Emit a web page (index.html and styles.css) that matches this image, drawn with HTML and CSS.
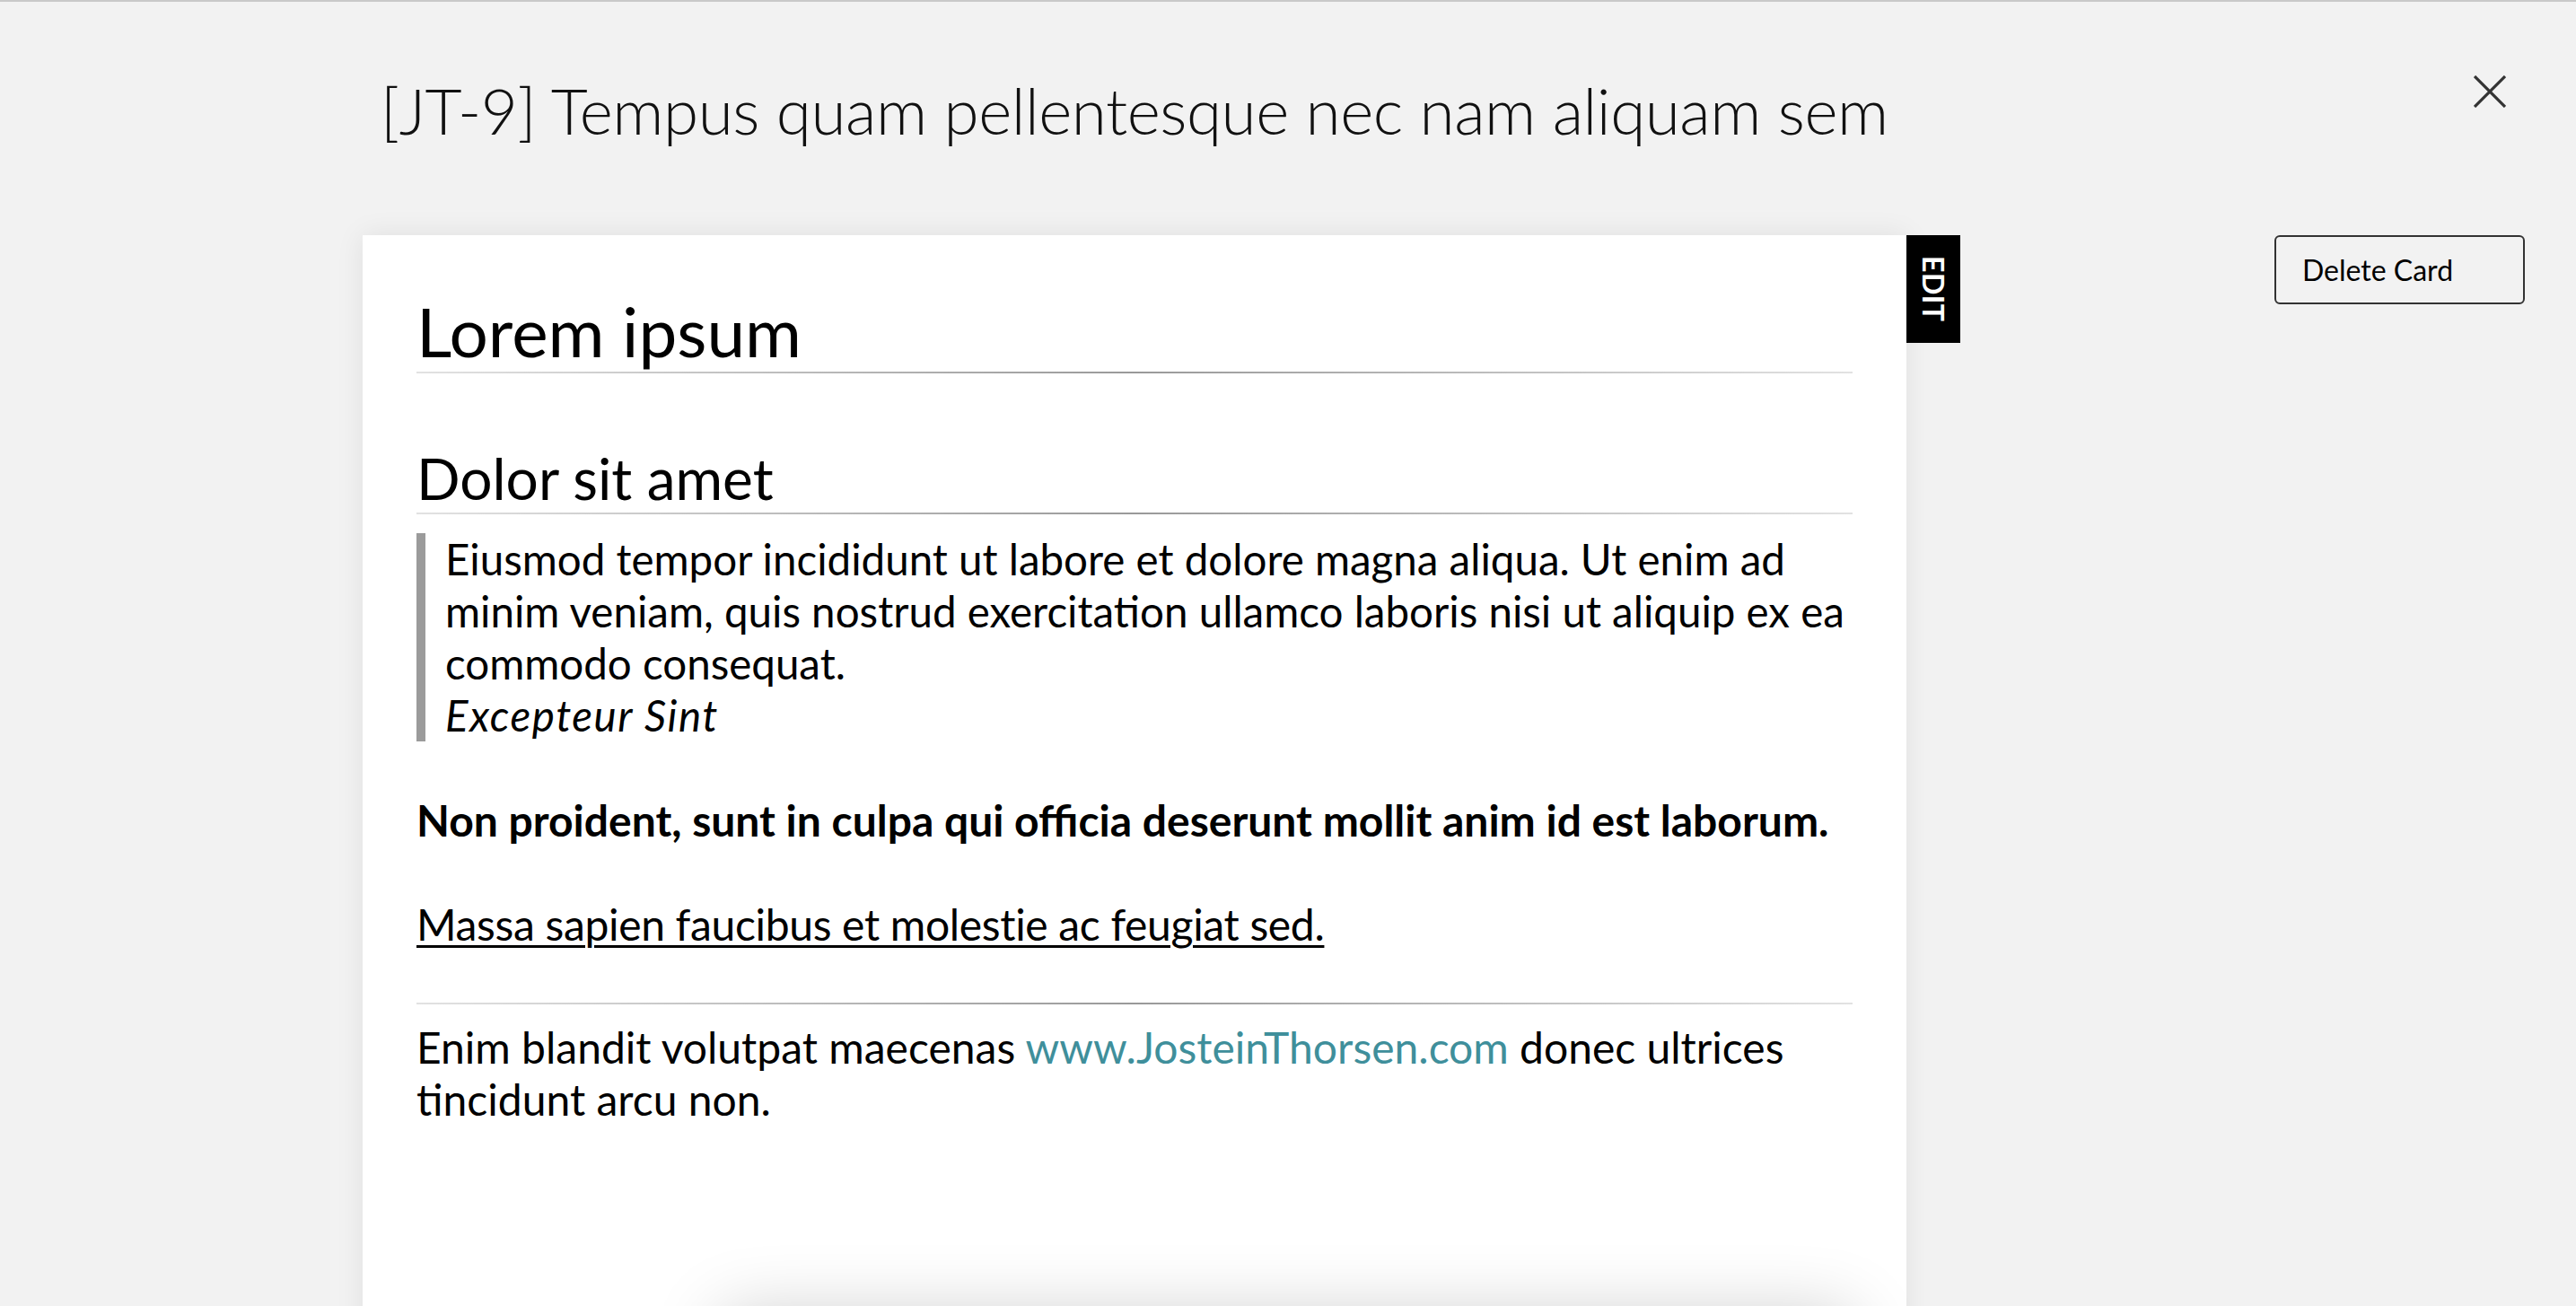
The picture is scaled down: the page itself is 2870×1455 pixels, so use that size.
FILE: index.html
```html
<!DOCTYPE html>
<html lang="en">
<head>
<meta charset="utf-8">
<title>[JT-9] Tempus quam pellentesque nec nam aliquam sem</title>
<link rel="stylesheet" href="styles.css">
</head>
<body>
<div class="page">
  <header class="top">
    <h1 class="title">[JT-9] Tempus quam pellentesque nec nam aliquam sem</h1>
    <button class="close" aria-label="Close">
      <svg viewBox="0 0 36 36" width="36" height="36"><path d="M1 1 L35 35 M35 1 L1 35" stroke="#333" stroke-width="3.2" fill="none"/></svg>
    </button>
  </header>
  <main class="layout">
    <article class="card">
      <div class="edit-tab">EDIT</div>
      <h1 class="doc-h1">Lorem ipsum</h1>
      <h2 class="doc-h2">Dolor sit amet</h2>
      <blockquote class="quote">
        <p>Eiusmod tempor incididunt ut labore et dolore magna aliqua. Ut enim ad minim veniam, quis nostrud exercitation ullamco laboris nisi ut aliquip ex ea commodo consequat.</p>
        <p><em class="cite">Excepteur Sint</em></p>
      </blockquote>
      <p class="para para-bold"><strong>Non proident, sunt in culpa qui officia deserunt mollit anim id est laborum.</strong></p>
      <p class="para para-under"><u>Massa sapien faucibus et molestie ac feugiat sed.</u></p>
      <hr class="rule">
      <p class="para para-last">Enim blandit volutpat maecenas <a class="link" href="#">www.JosteinThorsen.com</a> donec ultrices tincidunt arcu non.</p>
      <div class="footer-panel"></div>
    </article>
    <aside class="side">
      <button class="delete">Delete Card</button>
    </aside>
  </main>
</div>
</body>
</html>
```
FILE: styles.css
```css
html, body {
  margin: 0;
  padding: 0;
  height: 100%;
  overflow: hidden;
}
body {
  background: #f2f2f2;
  font-family: Lato, "Open Sans", sans-serif;
  color: #000;
  border-top: 2px solid #c9c9c9;
  box-sizing: border-box;
}
.page {
  display: flex;
  flex-direction: column;
}
.top {
  display: flex;
  justify-content: space-between;
  align-items: flex-start;
  padding: 78px 78px 0 424px;
}
.title {
  margin: 0;
  font-family: Lato, sans-serif;
  font-weight: 300;
  font-size: 71px;
  letter-spacing: -0.45px;
  line-height: 86px;
  color: #111;
}
.close {
  margin-top: 4px;
  padding: 0;
  border: 0;
  background: none;
  width: 36px;
  height: 36px;
  display: flex;
}
.layout {
  display: flex;
  align-items: flex-start;
  padding-left: 404px;
  margin-top: 96px;
}
.card {
  position: relative;
  width: 1720px;
  box-sizing: border-box;
  padding: 60px 60px 0;
  background: #fff;
  box-shadow: 0 0 30px rgba(0, 0, 0, 0.08);
  flex: none;
}
.edit-tab {
  position: absolute;
  top: 0;
  left: 100%;
  width: 60px;
  height: 120px;
  background: #000;
  color: #fff;
  display: flex;
  align-items: center;
  justify-content: center;
  writing-mode: vertical-rl;
  font-family: Lato, sans-serif;
  font-weight: 700;
  font-size: 32px;
  letter-spacing: 0.5px;
}
.doc-h1, .doc-h2 {
  margin: 0;
  font-weight: 400;
  line-height: normal;
  border-bottom: 2px solid #aaa;
  border-image: linear-gradient(to right, #e2e2e2, #999 50%, #e2e2e2) 1;
}
.doc-h1 {
  font-size: 76.5px;
}
.doc-h2 {
  font-size: 64px;
  margin-top: 78px;
}
.quote {
  margin: 21px 0 0;
  border-left: 10px solid #9b9b9b;
  padding-left: 22px;
}
.quote p {
  margin: 0;
  font-size: 47.5px;
  line-height: 58px;
}
.cite {
  letter-spacing: 1.6px;
}
.para {
  margin: 0;
  font-size: 48px;
  line-height: 58px;
}
.para-bold {
  margin-top: 59px;
}
.para-under {
  margin-top: 58px;
}
.para u {
  letter-spacing: -0.33px;
  text-decoration-thickness: 3px;
  text-underline-offset: 5px;
}
.rule {
  margin: 58px 0 0;
  border: 0;
  height: 2px;
  background: linear-gradient(to right, #e2e2e2, #999 50%, #e2e2e2);
}
.para-last {
  margin-top: 19px;
}
.link {
  color: #3f8f9b;
  text-decoration: none;
}
.footer-panel {
  margin: 210px 0 0 340px;
  height: 200px;
  background: #fff;
  box-shadow: 0 0 80px rgba(0, 0, 0, 0.2);
}
.side {
  margin-left: 410px;
}
.delete {
  width: 279px;
  height: 77px;
  box-sizing: border-box;
  border: 2px solid #333;
  border-radius: 6px;
  background: #f2f2f2;
  font-family: Lato, sans-serif;
  font-size: 32px;
  color: #000;
  text-align: left;
  padding: 0 0 0 29px;
}
```
